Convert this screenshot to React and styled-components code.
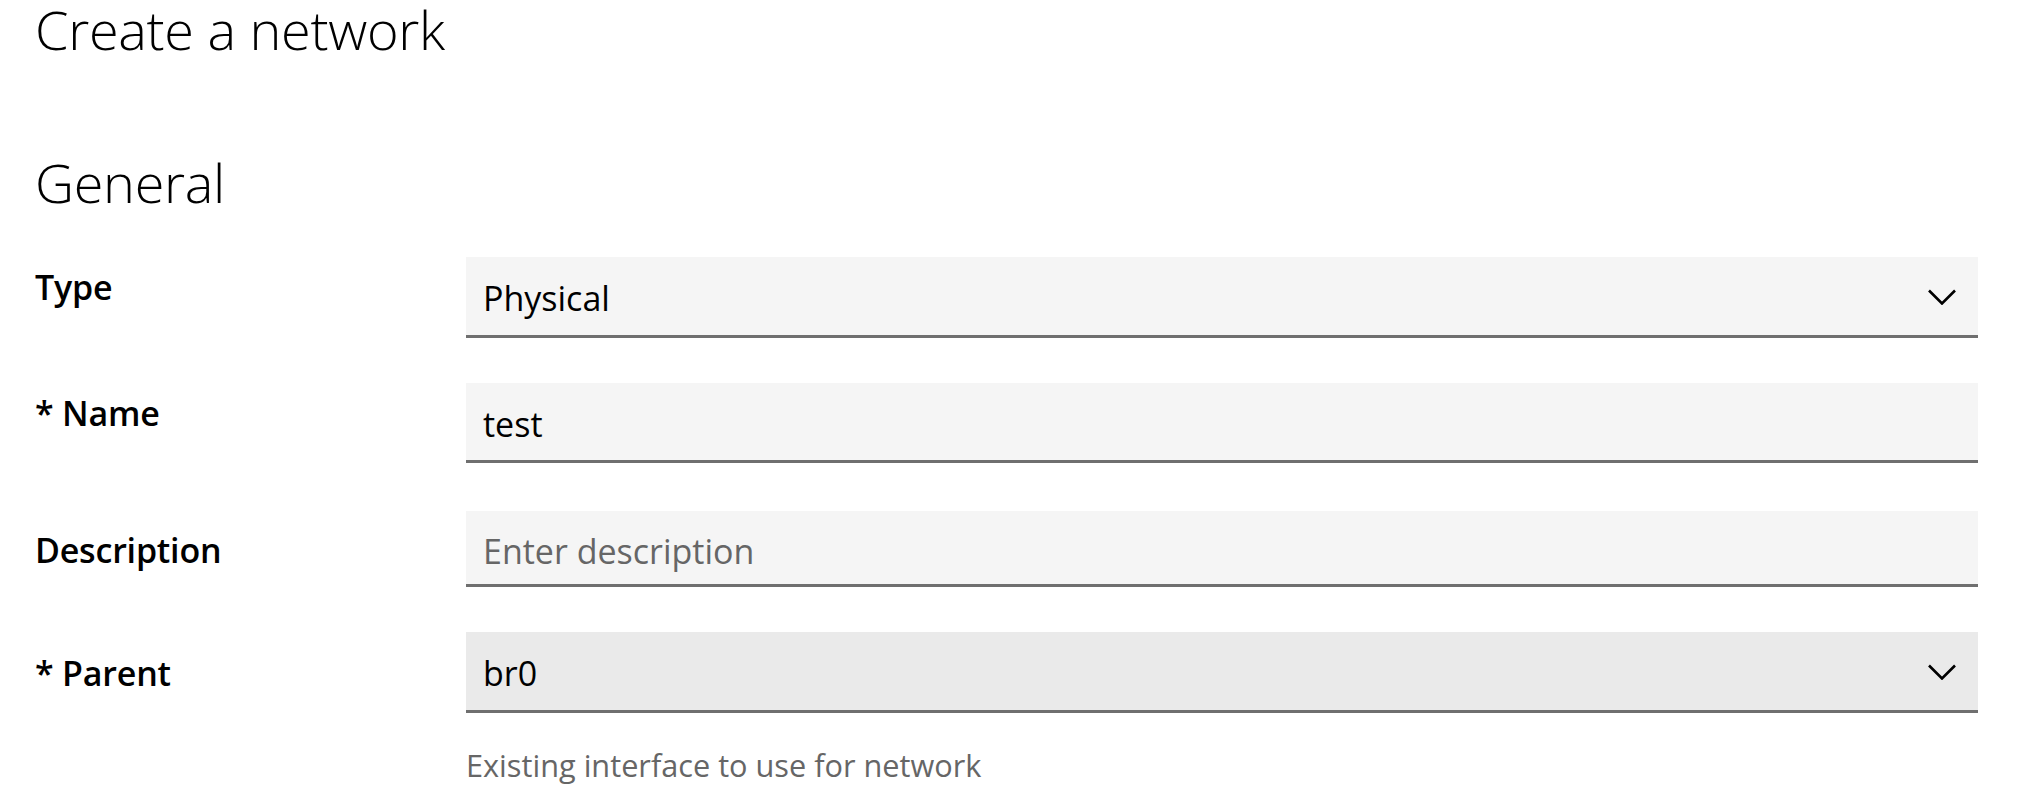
import React from "react";
import styled, { createGlobalStyle } from "styled-components";

const Global = createGlobalStyle`
  html, body { margin: 0; padding: 0; background: #fff; }
  body { font-family: "Open Sans", "Noto Sans", sans-serif; color: #000; }
  * { box-sizing: border-box; }
`;

const Page = styled.main`
  padding: 0 42px 0 35px;
`;

const Title = styled.h1`
  margin: 0;
  font-size: 54px;
  font-weight: 300;
  line-height: 58px;
  letter-spacing: -0.3px;
`;

const SectionTitle = styled.h2`
  margin: 95px 0 0;
  font-size: 54px;
  font-weight: 300;
  line-height: 58px;
  letter-spacing: -0.3px;
`;

const Form = styled.form`
  margin-top: 46px;
  display: flex;
  flex-direction: column;
`;

const Row = styled.div`
  display: grid;
  grid-template-columns: 431px 1fr;
  margin-top: ${(p) => p.$gap || 0}px;
`;

const Label = styled.label`
  font-size: 34px;
  font-weight: 600;
  line-height: 46px;
  padding-top: ${(p) => p.$top}px;
  letter-spacing: -0.2px;
`;

const fieldBase = `
  width: 100%;
  background: #f5f5f5;
  border: none;
  border-bottom: 3px solid #6f6f6f;
  border-radius: 0;
  font-family: "Open Sans", "Noto Sans", sans-serif;
  font-size: 34px;
  font-weight: 400;
  line-height: 46px;
  color: #000;
  padding: 18px 17px 0;
  margin: 0;
  outline: none;
`;

const SelectBox = styled.div`
  ${fieldBase}
  height: 81px;
  display: flex;
  align-items: flex-start;
  justify-content: space-between;
  padding-right: 22px;
  background: ${(p) => (p.$active ? "#eaeaea" : "#f5f5f5")};
`;

const Chevron = styled.svg`
  width: 28px;
  height: 16px;
  margin-top: 14px;
  flex: none;
`;

const TextInput = styled.input`
  ${fieldBase}
  height: ${(p) => p.$h}px;
  padding-top: ${(p) => p.$pt}px;
  padding-bottom: ${(p) => p.$h - 3 - 46 - p.$pt}px;
  display: block;
  &::placeholder { color: #666; opacity: 1; }
`;

const Help = styled.p`
  grid-column: 2;
  margin: 32px 0 0;
  font-size: 30.7px;
  font-weight: 400;
  line-height: 40px;
  color: #666;
`;

const ChevronIcon = () => (
  <Chevron viewBox="0 0 28 16" aria-hidden="true">
    <path d="M1 1.5 L14 14.5 L27 1.5" fill="none" stroke="#000" strokeWidth="2.6" />
  </Chevron>
);

const Select = ({ value, active }) => (
  <SelectBox role="combobox" $active={active}>
    <span>{value}</span>
    <ChevronIcon />
  </SelectBox>
);

export default function App() {
  return (
    <Page>
      <Global />
      <Title>Create a network</Title>
      <SectionTitle>General</SectionTitle>
      <Form onSubmit={(e) => e.preventDefault()}>
        <Row>
          <Label $top={7}>Type</Label>
          <Select value="Physical" />
        </Row>
        <Row $gap={45}>
          <Label $top={7}>* Name</Label>
          <TextInput $h={80} $pt={18} defaultValue="test" readOnly />
        </Row>
        <Row $gap={48}>
          <Label $top={16}>Description</Label>
          <TextInput $h={76} $pt={17} placeholder="Enter description" readOnly />
        </Row>
        <Row $gap={45}>
          <Label $top={18}>* Parent</Label>
          <Select value="br0" active />
          <Help>Existing interface to use for network</Help>
        </Row>
      </Form>
    </Page>
  );
}
